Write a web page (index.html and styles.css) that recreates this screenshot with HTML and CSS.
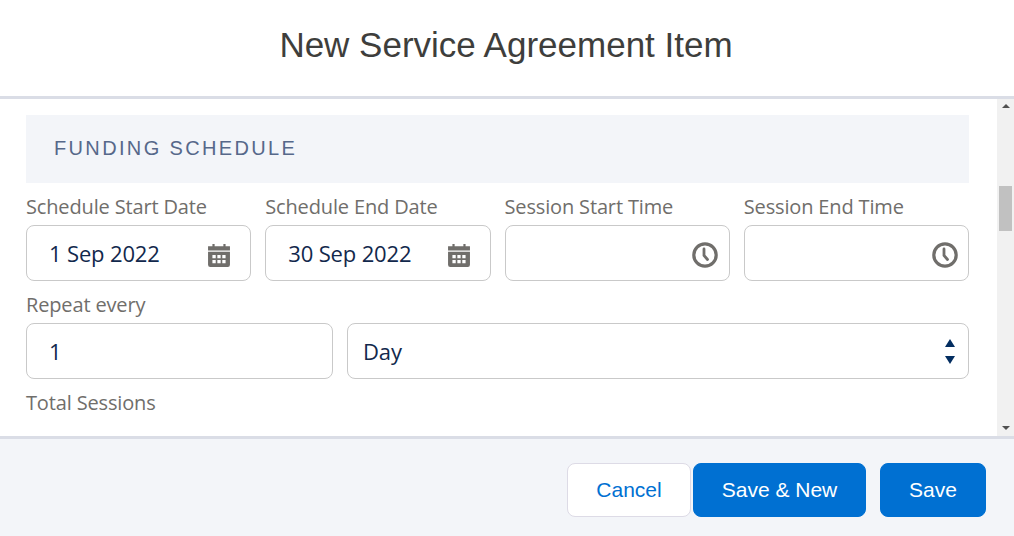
FILE: index.html
```html
<!DOCTYPE html>
<html lang="en">

<head>
    <meta charset="UTF-8">
    <meta name="viewport" content="width=device-width, initial-scale=1.0">
    <title>New Service Agreement Item</title>
    <link rel="stylesheet" href="styles.css">
</head>

<body>

    <div class="modal-header">
        <h1>New Service Agreement Item</h1>
    </div>

    <div class="modal-body">
        <div class="form-area">
            <h2 class="section-title">FUNDING SCHEDULE</h2>

            <div class="row-four">
                <div class="field">
                    <div class="label">Schedule Start Date</div>
                    <div class="input">
                        <span>1 Sep 2022</span>
                        <svg class="icon-calendar" viewBox="1 1 20 21">
                            <path fill="#706e6b" d="M5 1h2v2h8V1h2v2h4v4H1V3h4zM1 8h20v12a2 2 0 0 1-2 2H3a2 2 0 0 1-2-2z" />
                            <path fill="#fff" d="M5 11h3v3H5zM9.500 11h3v3h-3zM14 11h3v3h-3zM5 15.500h3v3H5zM9.500 15.500h3v3h-3zM14 15.500h3v3h-3z" />
                        </svg>
                    </div>
                </div>
                <div class="field">
                    <div class="label">Schedule End Date</div>
                    <div class="input">
                        <span>30 Sep 2022</span>
                        <svg class="icon-calendar" viewBox="1 1 20 21">
                            <path fill="#706e6b" d="M5 1h2v2h8V1h2v2h4v4H1V3h4zM1 8h20v12a2 2 0 0 1-2 2H3a2 2 0 0 1-2-2z" />
                            <path fill="#fff" d="M5 11h3v3H5zM9.500 11h3v3h-3zM14 11h3v3h-3zM5 15.500h3v3H5zM9.500 15.500h3v3h-3zM14 15.500h3v3h-3z" />
                        </svg>
                    </div>
                </div>
                <div class="field">
                    <div class="label">Session Start Time</div>
                    <div class="input">
                        <span></span>
                        <svg class="icon-clock" viewBox="0 0 26 26">
                            <circle cx="13" cy="13" r="11.200" fill="none" stroke="#706e6b" stroke-width="3.200" />
                            <path fill="none" stroke="#706e6b" stroke-width="2.800" stroke-linecap="round" d="M12 7v6.500l3.500 4" />
                        </svg>
                    </div>
                </div>
                <div class="field">
                    <div class="label">Session End Time</div>
                    <div class="input">
                        <span></span>
                        <svg class="icon-clock" viewBox="0 0 26 26">
                            <circle cx="13" cy="13" r="11.200" fill="none" stroke="#706e6b" stroke-width="3.200" />
                            <path fill="none" stroke="#706e6b" stroke-width="2.800" stroke-linecap="round" d="M12 7v6.500l3.500 4" />
                        </svg>
                    </div>
                </div>
            </div>

            <div class="label repeat-label">Repeat every</div>
            <div class="row-repeat">
                <div class="input"><span>1</span></div>
                <div class="input select">
                    <span>Day</span>
                    <div class="updown">
                        <i class="arrow-up"></i>
                        <i class="arrow-down"></i>
                    </div>
                </div>
            </div>

            <div class="label total-label">Total Sessions</div>
        </div>

        <div class="scrollbar">
            <i class="scroll-up"></i>
            <div class="scroll-track">
                <div class="scroll-thumb"></div>
            </div>
            <i class="scroll-down"></i>
        </div>
    </div>

    <div class="modal-footer">
        <button class="btn btn-neutral">Cancel</button>
        <button class="btn btn-brand btn-new">Save &amp; New</button>
        <button class="btn btn-brand btn-save">Save</button>
    </div>

</body>

</html>
```

FILE: styles.css
```css
* {
    box-sizing: border-box;
}

body {
    margin: 0;
    height: 536px;
    overflow: hidden;
    display: flex;
    flex-direction: column;
    background: #fff;
    font-family: "Open Sans", sans-serif;
}

.modal-header {
    height: 99px;
    border-bottom: 3px solid #dadde6;
    display: flex;
    justify-content: center;
    padding: 23px 2px 0 0;
}

.modal-header h1 {
    margin: 0;
    font-family: "Liberation Sans", Arial, sans-serif;
    font-size: 35px;
    line-height: 44px;
    font-weight: 400;
    color: #3e3e3c;
}

.modal-body {
    height: 337px;
    display: flex;
    overflow: hidden;
}

.form-area {
    flex: 1;
    padding: 16px 28px 0 26px;
}

.section-title {
    margin: 0;
    height: 68px;
    padding-left: 28px;
    background: #f3f5f9;
    font-family: "Liberation Sans", Arial, sans-serif;
    font-size: 20px;
    line-height: 67px;
    font-weight: 400;
    letter-spacing: 2.35px;
    color: #56688a;
}

.row-four {
    display: grid;
    grid-template-columns: repeat(4, 1fr);
    column-gap: 14px;
    margin-top: 10px;
}

.label {
    font-size: 20px;
    line-height: 28px;
    letter-spacing: -0.15px;
    color: #706e6b;
}

.field .label {
    margin-bottom: 4px;
}

.input {
    height: 56px;
    padding: 0 19px 0 22px;
    display: flex;
    align-items: center;
    justify-content: space-between;
    background: #fff;
    border: 1px solid #c9c9c9;
    border-radius: 8px;
    font-size: 22px;
    letter-spacing: -0.15px;
    color: #12284c;
}

.icon-calendar {
    width: 22px;
    height: 23px;
    margin-top: 4px;
    margin-right: 1px;
}

.icon-clock {
    width: 26px;
    height: 26px;
    margin-top: 3px;
    margin-right: -8.5px;
}

.repeat-label {
    margin-top: 10px;
}

.row-repeat {
    display: grid;
    grid-template-columns: 307px 1fr;
    column-gap: 14px;
    margin-top: 4px;
}

.select {
    padding-left: 15px;
}

.updown {
    display: flex;
    flex-direction: column;
    gap: 9px;
    margin-right: -6px;
}

.arrow-up {
    border-left: 5px solid transparent;
    border-right: 5px solid transparent;
    border-bottom: 8px solid #032d60;
}

.arrow-down {
    border-left: 5px solid transparent;
    border-right: 5px solid transparent;
    border-top: 8px solid #032d60;
}

.total-label {
    margin-top: 10px;
}

.scrollbar {
    width: 17px;
    background: #f1f1f1;
    display: flex;
    flex-direction: column;
    align-items: center;
}

.scroll-up {
    margin-top: 5px;
    border-left: 4px solid transparent;
    border-right: 4px solid transparent;
    border-bottom: 4px solid #505050;
}

.scroll-track {
    flex: 1;
    width: 100%;
    padding: 78px 2px 0;
}

.scroll-thumb {
    height: 45px;
    background: #c1c1c1;
}

.scroll-down {
    margin-bottom: 6px;
    border-left: 4px solid transparent;
    border-right: 4px solid transparent;
    border-top: 4px solid #505050;
}

.modal-footer {
    flex: 1;
    background: #f3f5f9;
    border-top: 3px solid #dadde6;
    display: flex;
    align-items: flex-start;
    padding: 24px 28px 0 567px;
}

.btn {
    height: 54px;
    border-radius: 8px;
    font-family: "Liberation Sans", Arial, sans-serif;
    font-size: 21px;
    padding: 0;
}

.btn-neutral {
    width: 124px;
    background: #fff;
    border: 1px solid #dddbe6;
    color: #0070d2;
}

.btn-brand {
    background: #0070d2;
    border: 1px solid #0070d2;
    color: #fff;
}

.btn-new {
    width: 173px;
    margin-left: 2px;
}

.btn-save {
    width: 106px;
    margin-left: 14px;
}
```
